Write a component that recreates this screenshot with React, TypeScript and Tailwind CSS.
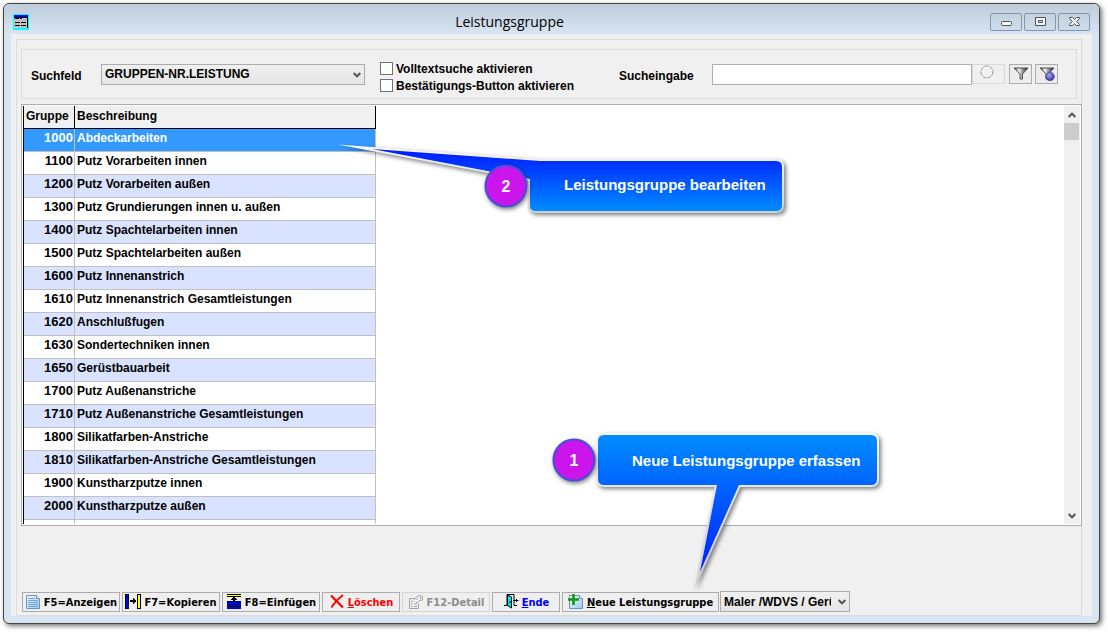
import React, { useState } from 'react';

const groups = [
  { nr: 1000, text: 'Abdeckarbeiten' },
  { nr: 1100, text: 'Putz Vorarbeiten innen' },
  { nr: 1200, text: 'Putz Vorarbeiten außen' },
  { nr: 1300, text: 'Putz Grundierungen innen u. außen' },
  { nr: 1400, text: 'Putz Spachtelarbeiten innen' },
  { nr: 1500, text: 'Putz Spachtelarbeiten außen' },
  { nr: 1600, text: 'Putz Innenanstrich' },
  { nr: 1610, text: 'Putz Innenanstrich Gesamtleistungen' },
  { nr: 1620, text: 'Anschlußfugen' },
  { nr: 1630, text: 'Sondertechniken innen' },
  { nr: 1650, text: 'Gerüstbauarbeit' },
  { nr: 1700, text: 'Putz Außenanstriche' },
  { nr: 1710, text: 'Putz Außenanstriche Gesamtleistungen' },
  { nr: 1800, text: 'Silikatfarben-Anstriche' },
  { nr: 1810, text: 'Silikatfarben-Anstriche Gesamtleistungen' },
  { nr: 1900, text: 'Kunstharzputze innen' },
  { nr: 2000, text: 'Kunstharzputze außen' },
];

const Chevron = ({ className = '', up = false }: { className?: string; up?: boolean }) => (
  <svg viewBox="0 0 8 6" className={`h-[6px] w-[8px] ${className}`} fill="none" stroke="#505050" strokeWidth="2">
    <path d={up ? 'M0.7 5 L4 1.6 L7.3 5' : 'M0.7 1 L4 4.4 L7.3 1'} />
  </svg>
);

const WindowIcon = () => (
  <svg viewBox="0 0 16 16" className="h-4 w-4" shapeRendering="crispEdges">
    <path fill="#00ffff" d="M0 0h16v16H0z" />
    <path fill="#c0c0c0" d="M1 4h14v10H1z" />
    <path fill="#0000ff" d="M1 1h14v2H1z" />
    <path fill="#000" d="M1 3h14v1H1zM14 3h1v11h-1zM2 4h4v1H2zM7 4h2v1H7zM2 8h5v1H2zM8 8h5v1H8zM2 11h5v1H2zM8 11h5v1H8z" />
  </svg>
);

const PageIcon = ({ plus = false }: { plus?: boolean }) => (
  <svg viewBox="0 0 16 16" className="h-4 w-4 shrink-0">
    <defs>
      <linearGradient id="page" x1="0" y1="0" x2="1" y2="1">
        <stop offset="0" stopColor="#f4fbff" />
        <stop offset="1" stopColor="#9cc8ee" />
      </linearGradient>
    </defs>
    <path d="M1.5 1.5h10l3 3v10h-13z" fill="url(#page)" stroke="#6f93b8" />
    <path d="M11.5 1.500v3h3" fill="#fff" stroke="#6f93b8" />
    {plus ? (
      <path d="M5.5 0v11M0 5.5h11" stroke="#109a10" strokeWidth="2.6" />
    ) : (
      <path d="M3 4.5h7M3 6.5h10M3 8.5h10M3 10.5h10M3 12.5h10" stroke="#6aa5dc" />
    )}
  </svg>
);

const CopyIcon = () => (
  <svg viewBox="0 0 16 16" className="h-4 w-4 shrink-0" shapeRendering="crispEdges">
    <path fill="#000" d="M0 0h4v15H0zM12 0h4v15h-4zM5 6h4v2H5zM8 4h1v6H8zM9 5h1v4H9zM10 6h1v2h-1z" />
    <path fill="#0000ff" d="M1 1h2v13H1z" />
    <path fill="#ffff00" d="M13 1h2v13h-2z" />
  </svg>
);

const InsertIcon = () => (
  <svg viewBox="0 0 16 16" className="h-4 w-4 shrink-0" shapeRendering="crispEdges">
    <path fill="#000" d="M1 0h14v3H1zM7 3h2v4H7zM5 5h6v1H5zM6 4h4v1H6zM1 7h14v8H1z" />
    <path fill="#ffff00" d="M1 1h14v1H1z" />
    <path fill="#0000ff" d="M1 8h14v2H1zM1 11h14v1H1zM1 13h14v2H1z" />
  </svg>
);

const DeleteIcon = () => (
  <svg viewBox="0 0 16 16" className="h-4 w-4 shrink-0" fill="none" stroke="#ff0000">
    <path d="M2 1.5 L14 13.5" strokeWidth="2.2" />
    <path d="M14 1 C9 5 5 9 2.5 13.5" strokeWidth="1.8" />
  </svg>
);

const DetailIcon = () => (
  <svg viewBox="0 0 16 16" className="h-4 w-4 shrink-0" fill="none" stroke="#a0a0a0">
    <path d="M1.5 4.5h5M1.5 4.5v10h9v-5" />
    <path d="M3 7.5h2M3 10h1.500M6 10h3M3 12.500h1.500M6 12.500h3" />
    <path d="M5.500 6.500 L9 2.500 L12 1.500 L14.500 2.500 V6 L11.500 6.500 L9 9 L8 7.500" fill="#f8f8f8" />
    <path d="M8 5.500l2-1M12.500 3v2" />
  </svg>
);

const DoorIcon = () => (
  <svg viewBox="0 0 16 16" className="h-4 w-4 shrink-0">
    <path d="M1 11.500h3v-11h7v11h3M10.500 6.500h5M13.500 5v3" fill="none" stroke="#000" />
    <path d="M4.500 1 L8.500 3 V14 L4.500 11.500z" fill="#00e5e5" stroke="#000" />
    <path d="M7 7v2" stroke="#000" />
  </svg>
);

const FilterIcon = ({ globe = false }: { globe?: boolean }) => (
  <svg viewBox="0 0 16 14" className="h-[14px] w-4">
    <defs>
      <linearGradient id="funnel" x1="0" x2="1">
        <stop offset="0" stopColor="#444" />
        <stop offset="0.35" stopColor="#f4f4f4" />
        <stop offset="0.6" stopColor="#999" />
        <stop offset="1" stopColor="#222" />
      </linearGradient>
      <radialGradient id="globe" cx="0.4" cy="0.35" r="0.7">
        <stop offset="0" stopColor="#a9a9f5" />
        <stop offset="1" stopColor="#2b2b9c" />
      </radialGradient>
    </defs>
    <path d="M1 1h14L9.500 7V12h-2.500V7z" fill="url(#funnel)" stroke="#333" strokeWidth="0.800" />
    {globe && <circle cx="11" cy="9.500" r="4.300" fill="url(#globe)" stroke="#3535a0" strokeWidth="0.600" />}
  </svg>
);

const captionButtons = [
  { label: 'Minimieren', icon: <rect x="3.500" y="7.500" width="10" height="4" rx="1" /> },
  { label: 'Maximieren', icon: <path fillRule="evenodd" d="M3.500 3.500h10v8h-10zM6.500 6.500v2h4v-2z" /> },
  {
    label: 'Schließen',
    icon: <path d="M3.500 3.500h3.200L8.500 5.500l1.800-2h3.200v1L10.700 7.500l2.800 3v1h-3.200L8.500 9.500l-1.800 2H3.500v-1l2.800-3-2.800-3z" />,
  },
];

const actions = [
  { icon: <PageIcon />, key: '', label: 'F5=Anzeigen', style: 'w-[98px] border-[#acacac] text-black' },
  { icon: <CopyIcon />, key: '', label: 'F7=Kopieren', style: 'w-[98px] border-[#acacac] text-black' },
  { icon: <InsertIcon />, key: '', label: 'F8=Einfügen', style: 'w-[98px] border-[#acacac] text-black' },
  { icon: <DeleteIcon />, key: 'L', label: 'öschen', style: 'w-[78px] border-[#acacac] text-[#ff0000]' },
  { icon: <DetailIcon />, key: '', label: 'F12-Detail', style: 'w-[88px] border-[#d4d4d4] text-[#8c8c8c]', disabled: true },
  { icon: <DoorIcon />, key: 'E', label: 'nde', style: 'w-[68px] border-[#acacac] text-[#0000ff]' },
  { icon: <PageIcon plus />, key: 'N', label: 'eue Leistungsgruppe', style: 'w-[157px] border-[#acacac] text-black' },
];

type CalloutProps = {
  id: string;
  className: string;
  width: number;
  height: number;
  path: string;
  colors: [string, string];
  circle: [number, number];
  textPos: [number, number];
  text: string;
};

// Speech bubble with a pointed tail and a numbered badge
const Callout = ({ id, className, width, height, path, colors, circle, textPos, text }: CalloutProps) => (
  <svg
    width={width}
    height={height}
    className={`pointer-events-none absolute font-['Liberation_Sans',Arial,sans-serif] ${className}`}
  >
    <defs>
      <linearGradient id={`${id}-fill`} x1="0" y1="0" x2="0" y2="1">
        <stop offset="0" stopColor={colors[0]} />
        <stop offset="1" stopColor={colors[1]} />
      </linearGradient>
      <linearGradient id={`${id}-edge`} x1="0" y1="0" x2="0" y2="1">
        <stop offset="0" stopColor="#f6f6f6" />
        <stop offset="1" stopColor="#cfcfcf" />
      </linearGradient>
    </defs>
    <g className="drop-shadow-[2px_2px_2px_rgba(0,0,0,0.5)]">
      <path d={path} fill="none" stroke={`url(#${id}-edge)`} strokeWidth="4" strokeMiterlimit="40" />
      <path d={path} fill={`url(#${id}-fill)`} />
    </g>
    <circle
      cx={circle[0]}
      cy={circle[1]}
      r="20.500"
      fill="#cc14ec"
      stroke="#4450d8"
      strokeWidth="2"
      className="drop-shadow-[1px_2px_2px_rgba(0,0,0,0.5)]"
    />
    <text x={circle[0]} y={circle[1] + 6} textAnchor="middle" fill="#fff" fontSize="16" fontWeight="bold">
      {id}
    </text>
    <text x={textPos[0]} y={textPos[1]} fill="#fff" fontSize="15" fontWeight="bold">
      {text}
    </text>
  </svg>
);

const SearchBar = () => (
  <div className="mr-1 flex h-[50px] items-center border border-[#dcdcdc] pr-[18px] pl-[9px]">
    <label htmlFor="suchfeld" className="w-[70px] shrink-0 pt-1">
      Suchfeld
    </label>
    <div className="relative w-[264px] shrink-0">
      <select
        id="suchfeld"
        className="block h-[21px] w-full appearance-none border border-[#acacac] bg-linear-to-b from-[#f0f0f0] to-[#e5e5e5] pl-[3px]"
      >
        <option>GRUPPEN-NR.LEISTUNG</option>
      </select>
      <Chevron className="pointer-events-none absolute top-2 right-1" />
    </div>
    <div className="ml-[15px] flex w-[239px] shrink-0 flex-col gap-1 pt-[6px]">
      <label className="flex h-[13px] items-center gap-[3px]">
        <input type="checkbox" className="h-[13px] w-[13px] appearance-none border border-[#707070] bg-white" />
        Volltextsuche aktivieren
      </label>
      <label className="flex h-[13px] items-center gap-[3px]">
        <input type="checkbox" className="h-[13px] w-[13px] appearance-none border border-[#707070] bg-white" />
        Bestätigungs-Button aktivieren
      </label>
    </div>
    <label htmlFor="sucheingabe" className="w-[93px] shrink-0 pt-1">
      Sucheingabe
    </label>
    <input id="sucheingabe" type="text" className="h-[21px] min-w-0 flex-1 border border-[#abadb3] bg-white px-1" />
    <button
      aria-label="Suchen"
      disabled
      className="flex h-5 w-[33px] shrink-0 justify-center border border-[#d9d9d9] pr-1"
    >
      <svg viewBox="0 0 14 14" className="h-[14px] w-[14px]" fill="none">
        <circle cx="8" cy="8" r="6" stroke="#fff" />
        <circle cx="7" cy="7" r="6" stroke="#909090" strokeDasharray="4 1" />
      </svg>
    </button>
    <button
      aria-label="Filter"
      className="ml-1 flex h-5 w-[23px] shrink-0 items-center justify-center border border-[#acacac] bg-[#ececec]"
    >
      <FilterIcon />
    </button>
    <button
      aria-label="Filter bearbeiten"
      className="ml-[3px] flex h-5 w-[23px] shrink-0 items-center justify-center border border-[#acacac] bg-[#ececec]"
    >
      <FilterIcon globe />
    </button>
  </div>
);

const GroupTable = () => {
  const [selected, setSelected] = useState(1000);

  return (
    <div className="-mr-px mt-[5px] flex min-h-0 flex-1 justify-between border border-[#abadb3] bg-white p-px">
      <div className="w-[353px] overflow-hidden">
        <table className="w-full table-fixed border-separate border-spacing-0 border-l border-black">
          <thead>
            <tr className="h-[23px] bg-[#f0f0f0] text-left">
              <th className="w-[51px] border-r border-b border-black p-0 pb-[3px] pl-[2px]">Gruppe</th>
              <th className="border-r border-b border-black p-0 pb-[3px] pl-[2px]">Beschreibung</th>
            </tr>
          </thead>
          <tbody>
            {groups.map(({ nr, text }, i) => (
              <tr
                key={nr}
                onClick={() => setSelected(nr)}
                className={`h-[23px] ${
                  nr === selected ? 'bg-[#3399ff] text-white' : i % 2 ? 'bg-white' : 'bg-[#d9e3ff]'
                }`}
              >
                <td className="border-r border-b border-[#c0c0c0] p-0 pr-px pb-[5px] text-right text-[13px]">{nr}</td>
                <td className="border-r border-b border-[#c0c0c0] p-0 pb-[5px] pl-[2px] whitespace-nowrap">{text}</td>
              </tr>
            ))}
            <tr className="h-[23px]">
              <td className="border-r border-[#c0c0c0]" />
              <td className="border-r border-[#c0c0c0]" />
            </tr>
          </tbody>
        </table>
      </div>
      <div className="flex w-4 flex-col items-center bg-[#f0f0f0]">
        <button aria-label="Nach oben" className="flex h-[17px] w-full items-center justify-center">
          <Chevron up />
        </button>
        <div className="h-[17px] w-[15px] self-start bg-[#cdcdcd]" />
        <button aria-label="Nach unten" className="mt-auto flex h-[17px] w-full items-center justify-center">
          <Chevron />
        </button>
      </div>
    </div>
  );
};

const ActionBar = () => (
  <div className="mt-[65px] mb-[3px] flex items-end gap-[2px] pl-px">
    {actions.map(({ icon, key, label, style, disabled }) => (
      <button
        key={label}
        disabled={disabled}
        className={`flex h-5 shrink-0 items-center justify-center gap-[3px] border bg-[#efefef] font-['DejaVu_Sans_Condensed','Noto_Sans',sans-serif] text-[11px] leading-4 whitespace-nowrap ${style}`}
      >
        {icon}
        <span className="pt-px">
          {key && <span className="underline">{key}</span>}
          {label}
        </span>
      </button>
    ))}
    <div className="relative -ml-px w-[130px]">
      <select
        aria-label="Gewerk"
        className="block h-[21px] w-full appearance-none overflow-hidden border border-[#acacac] bg-linear-to-b from-[#f0f0f0] to-[#e5e5e5] pr-[18px] pl-[3px]"
      >
        <option>Maler /WDVS / Gerüst</option>
      </select>
      <Chevron className="pointer-events-none absolute top-2 right-1" />
    </div>
  </div>
);

const App = () => (
  <div className="relative h-screen bg-white pt-[3px] pr-2 pb-2 pl-[3px] font-['Liberation_Sans',Arial,sans-serif] text-[12px] leading-4 font-bold text-black">
    <div className="flex h-full flex-col rounded-md border border-[#444] bg-[#d7e4f1] px-[7px] pb-[7px] shadow-[2px_2px_5px_rgba(0,0,0,0.55)]">
      <header className="-mx-[7px] flex h-[30px] shrink-0 items-center rounded-t-md bg-linear-to-b from-[#bfcdda] to-[#d7e4f1] px-[9px] pt-[6px]">
        <WindowIcon />
        <h1 className="flex-1 text-center font-['Open_Sans','Noto_Sans',sans-serif] text-[14px] font-normal">
          Leistungsgruppe
        </h1>
        <div className="flex gap-[2px]">
          {captionButtons.map(({ label, icon }) => (
            <button
              key={label}
              aria-label={label}
              className="flex h-[18px] w-8 items-center justify-center rounded-xs border border-[#8494b0] bg-linear-to-b from-[#c5d3e1] to-[#cddbea]"
            >
              <svg viewBox="0 0 17 16" className="h-4 w-[17px]" fill="#f4f4f4" stroke="#4b5468">
                {icon}
              </svg>
            </button>
          ))}
        </div>
      </header>
      <main className="flex min-h-0 flex-1 flex-col bg-[#f0f0f0] pt-[5px] pr-[10px] pl-[5px]">
        <div className="flex min-h-0 flex-1 flex-col border border-[#dcdcdc] pt-[9px] pl-1">
          <SearchBar />
          <GroupTable />
          <ActionBar />
        </div>
      </main>
    </div>
    <Callout
      id="2"
      className="top-[140px] left-[330px]"
      width={470}
      height={85}
      path="M42 9 L210 21 H446 Q452 21 452 27 V65 Q452 71 446 71 H206 Q200 71 200 65 V39 Z"
      colors={['#0018ff', '#008cff']}
      circle={[176, 46]}
      textPos={[234, 50]}
      text="Leistungsgruppe bearbeiten"
    />
    <Callout
      id="1"
      className="top-[425px] left-[540px]"
      width={350}
      height={175}
      path="M64 10 H331 Q337 10 337 16 V54 Q337 60 331 60 H199 L160 147 L177 60 H64 Q58 60 58 54 V16 Q58 10 64 10 Z"
      colors={['#008cff', '#0020ff']}
      circle={[34, 35]}
      textPos={[92, 41]}
      text="Neue Leistungsgruppe erfassen"
    />
  </div>
);

export default App;
